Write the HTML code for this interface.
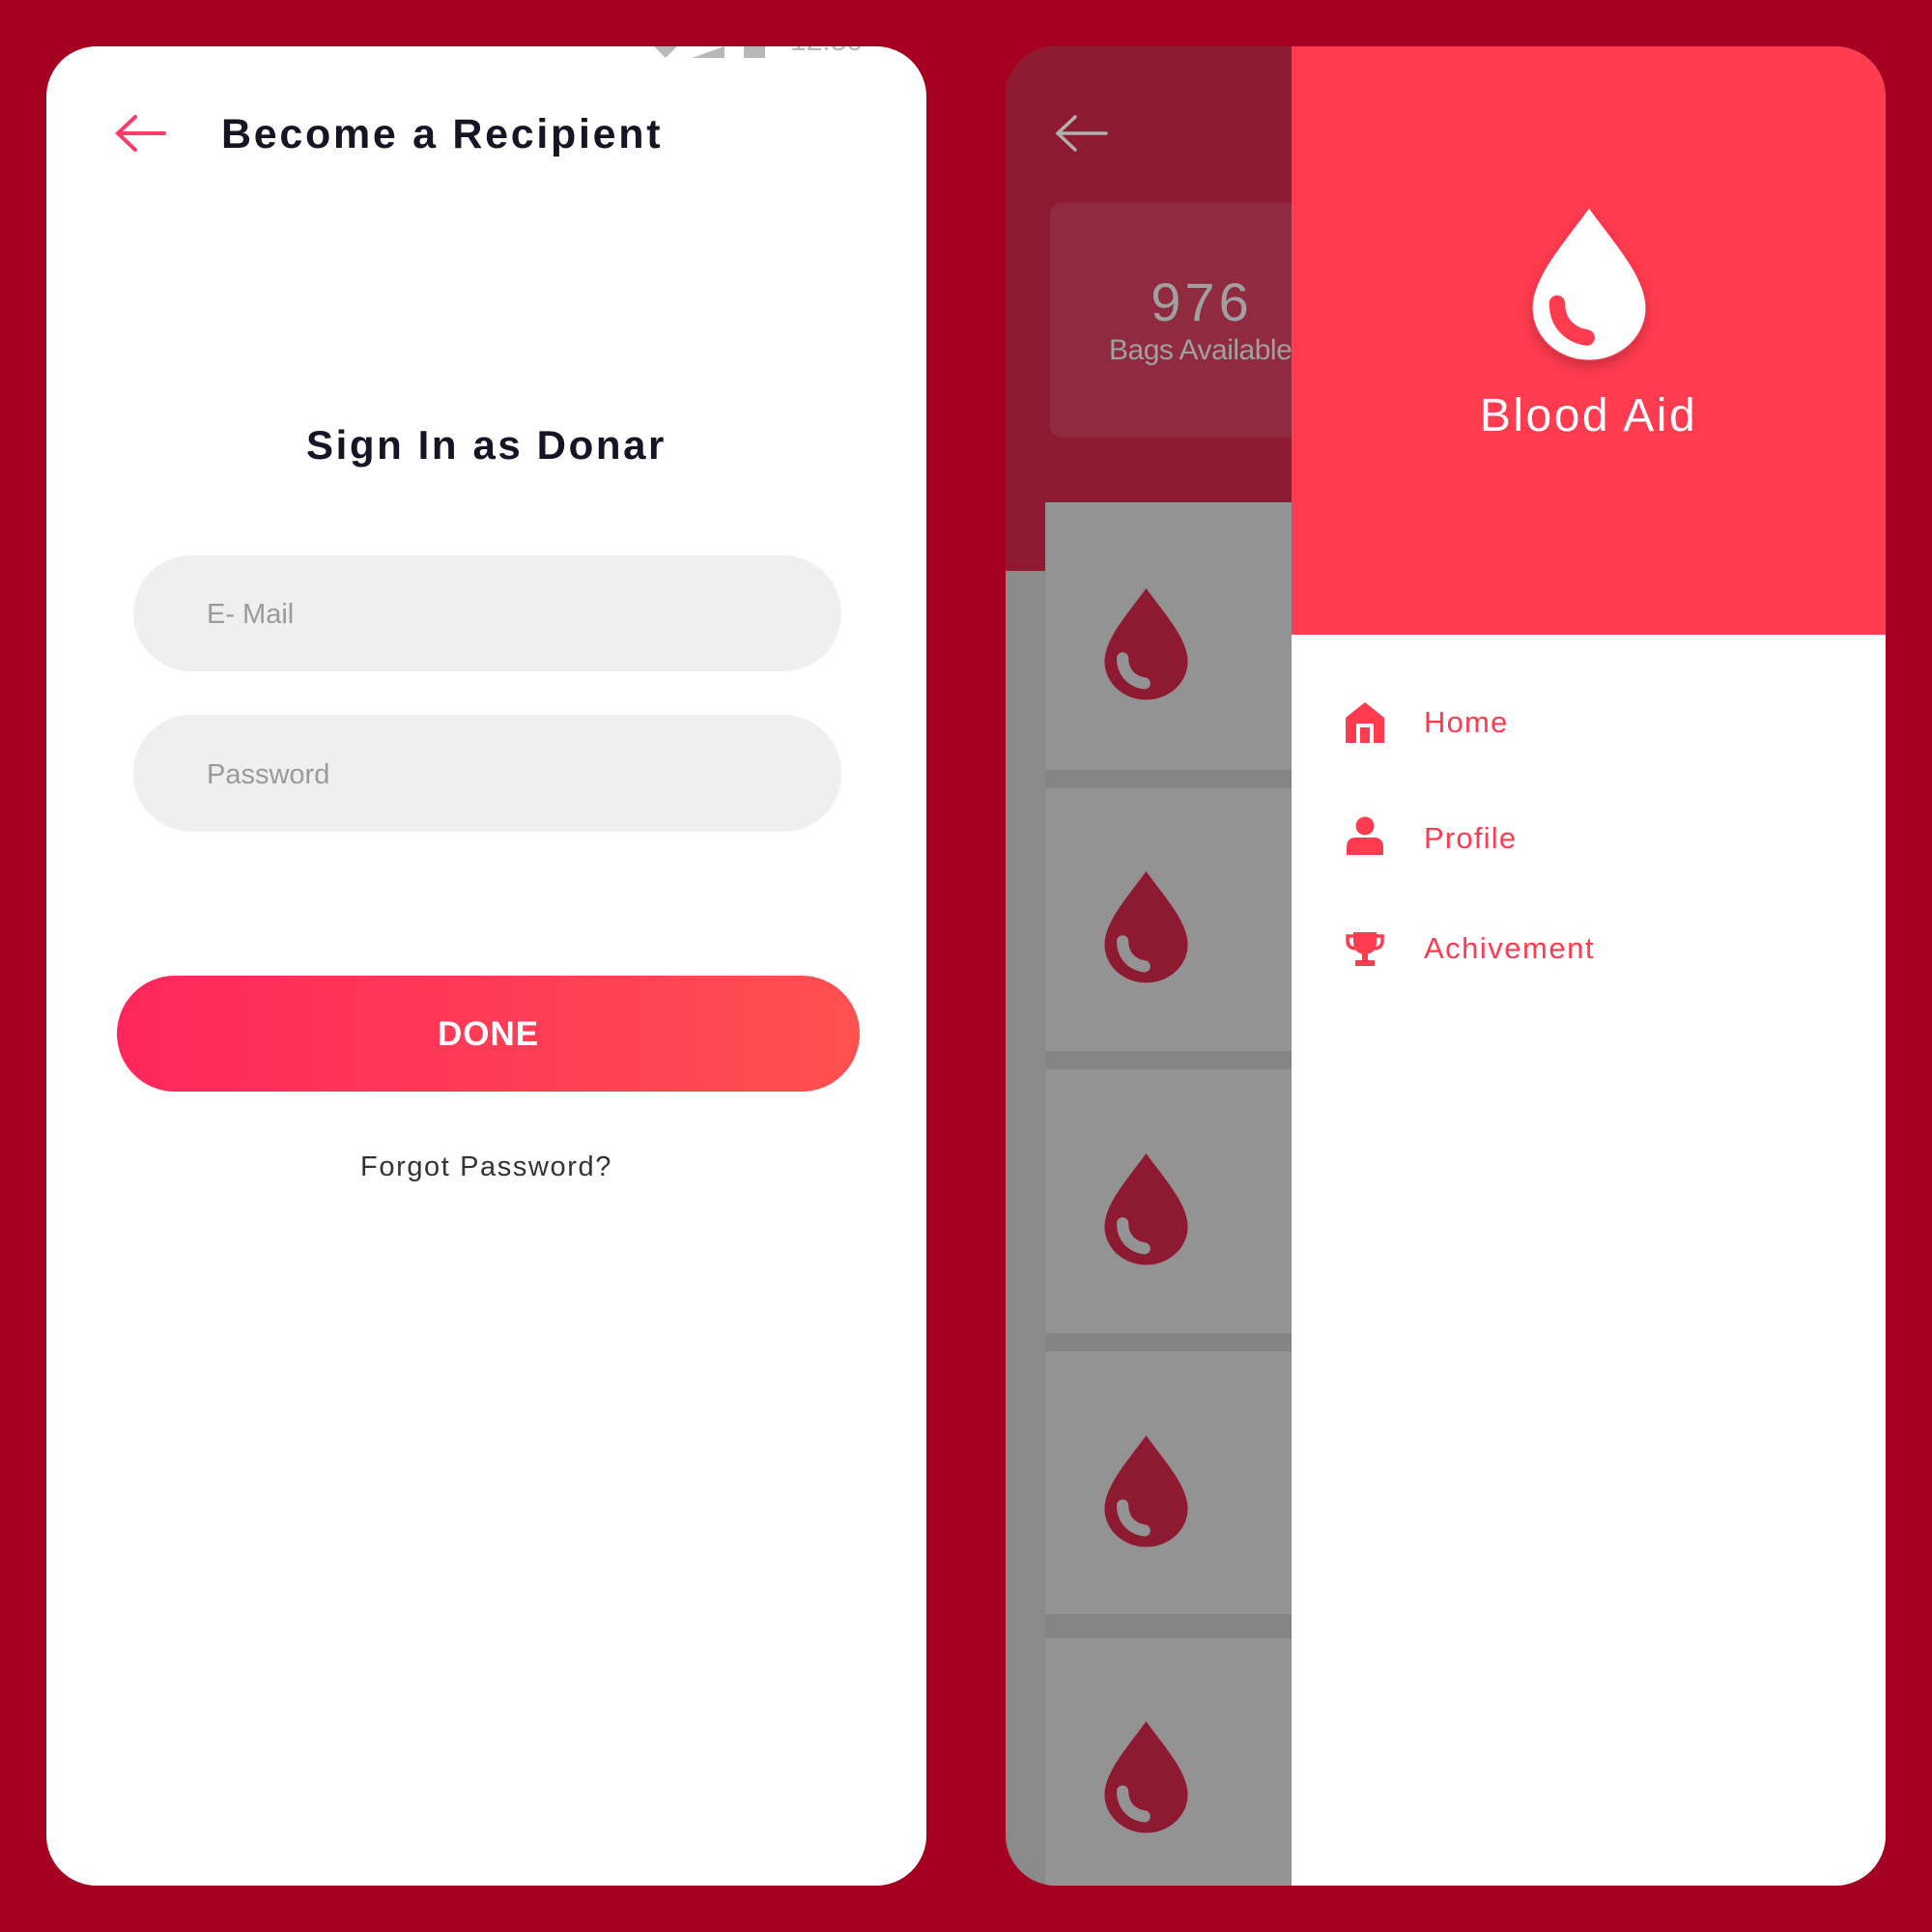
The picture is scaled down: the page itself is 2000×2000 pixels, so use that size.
<!DOCTYPE html>
<html><head><style>
*{margin:0;padding:0;box-sizing:border-box}
body{width:2000px;height:2000px;background:#a50021;position:relative;overflow:hidden;font-family:"Liberation Sans",sans-serif}
.a{position:absolute}
</style></head><body>
<div class="a" style="left:48px;top:48px;width:911px;height:1904px;background:#fff;border-radius:52px;overflow:hidden">
  <div class="a" style="left:629px;top:0;width:24px;height:12px;background:#b8b8b8;clip-path:polygon(0 0,100% 0,50% 100%)"></div>
  <div class="a" style="left:668px;top:0;width:34px;height:12px;background:#b8b8b8;clip-path:polygon(100% 0,100% 100%,0 100%)"></div>
  <div class="a" style="left:722px;top:0;width:22px;height:12px;background:#b8b8b8"></div>
  <div class="a" style="left:770px;top:-22px;font-size:30px;color:#b8b8b8">12:30</div>
  <svg class="a" style="left:70px;top:70px" width="54" height="40" viewBox="0 0 54 40"><path d="M52 20H4M22 3L4 20l18 17" stroke="#ff3b6a" stroke-width="4" fill="none" stroke-linecap="round"/></svg>
  <div class="a" style="left:181px;top:67px;font-size:43px;font-weight:bold;color:#151525;white-space:nowrap;letter-spacing:2.7px">Become a Recipient</div>
  <div class="a" style="left:0;width:911px;top:389px;text-align:center;font-size:42px;font-weight:bold;color:#151525;letter-spacing:2.6px">Sign In as Donar</div>
  <div class="a" style="left:90px;top:527px;width:733px;height:120px;border-radius:60px;background:#efefef"></div>
  <div class="a" style="left:166px;top:572px;font-size:29px;color:#9a9a9a">E- Mail</div>
  <div class="a" style="left:90px;top:692px;width:733px;height:121px;border-radius:60px;background:#efefef"></div>
  <div class="a" style="left:166px;top:738px;font-size:29px;color:#9a9a9a">Password</div>
  <div class="a" style="left:73px;top:962px;width:769px;height:120px;border-radius:60px;background:linear-gradient(90deg,#ff265c,#ff5050)"></div>
  <div class="a" style="left:73px;top:1003px;width:769px;text-align:center;font-size:35px;font-weight:bold;color:#fff;letter-spacing:1px">DONE</div>
  <div class="a" style="left:0;width:911px;top:1144px;text-align:center;font-size:29px;color:#333;letter-spacing:1.6px">Forgot Password?</div>
</div>

<div class="a" style="left:1041px;top:48px;width:911px;height:1904px;border-radius:52px;overflow:hidden;background:#8a8a8a">
  <div class="a" style="left:0;top:0;width:296px;height:543px;background:#8e1a32"></div>
  <svg class="a" style="left:50px;top:70px" width="56" height="40" viewBox="0 0 56 40"><path d="M54 20H4M22 3L4 20l18 17" stroke="#b0b0b0" stroke-width="3.5" fill="none" stroke-linecap="round"/></svg>
  <div class="a" style="left:46px;top:162px;width:260px;height:243px;background:#902a3e;border-radius:12px"></div>
  <div class="a" style="left:70px;top:232px;width:266px;text-align:center;font-size:56px;color:#a0a0a0;letter-spacing:4px">976</div>
  <div class="a" style="left:107px;top:298px;font-size:30px;color:#a0a0a0;white-space:nowrap;letter-spacing:-0.5px">Bags Available</div>
  <div class="a" style="left:41px;top:472px;width:260px;height:1440px;background:#858585"></div>
  <div class="a" style="left:41px;top:472px;width:260px;height:277px;background:#939393"></div>
  <div class="a" style="left:41px;top:768px;width:260px;height:272px;background:#939393"></div>
  <div class="a" style="left:41px;top:1059px;width:260px;height:273px;background:#939393"></div>
  <div class="a" style="left:41px;top:1351px;width:260px;height:272px;background:#939393"></div>
  <div class="a" style="left:41px;top:1648px;width:260px;height:260px;background:#939393"></div>
  <svg width="0" height="0" style="position:absolute"><defs><symbol id="d" viewBox="0 0 100 134"><path d="M50 0C30 28 0 60 0 88a50 46 0 0 0 100 0C100 60 70 28 50 0Z"/><path d="M22 84c0 18 12 28 26 30" stroke-width="14" stroke-linecap="round" fill="none"/></symbol></defs></svg>
  <svg class="a" style="left:102px;top:560px" width="87" height="117"><use href="#d" fill="#8e1a32" stroke="#939393"/></svg>
  <svg class="a" style="left:102px;top:853px" width="87" height="117"><use href="#d" fill="#8e1a32" stroke="#939393"/></svg>
  <svg class="a" style="left:102px;top:1145px" width="87" height="117"><use href="#d" fill="#8e1a32" stroke="#939393"/></svg>
  <svg class="a" style="left:102px;top:1437px" width="87" height="117"><use href="#d" fill="#8e1a32" stroke="#939393"/></svg>
  <svg class="a" style="left:102px;top:1733px" width="87" height="117"><use href="#d" fill="#8e1a32" stroke="#939393"/></svg>
  <div class="a" style="left:296px;top:0;width:615px;height:609px;background:#ff3b50"></div>
  <div class="a" style="left:296px;top:609px;width:615px;height:1295px;background:#fff"></div>
  <svg class="a" style="left:545px;top:166px;filter:drop-shadow(0 6px 6px rgba(0,0,0,.2))" width="118" height="160"><use href="#d" fill="#fff" stroke="#ff3b50"/></svg>
  <div class="a" style="left:296px;top:355px;width:615px;text-align:center;font-size:48px;color:#fff;letter-spacing:2.5px">Blood Aid</div>
  <svg class="a" style="left:352px;top:679px" width="40" height="42" viewBox="0 0 40 42"><path d="M20 0L40 16V42H29V22H11V42H0V16Z" fill="#ff3b50"/><rect x="15" y="26" width="10" height="16" fill="#ff3b50"/></svg>
  <div class="a" style="left:433px;top:682px;font-size:31px;color:#ff3b50;letter-spacing:1.2px">Home</div>
  <svg class="a" style="left:353px;top:797px" width="38" height="40" viewBox="0 0 38 40"><circle cx="19" cy="10" r="9.5" fill="#ff3b50"/><path d="M0 40V32Q0 22 10 22H28Q38 22 38 32V40Z" fill="#ff3b50"/></svg>
  <div class="a" style="left:433px;top:802px;font-size:31px;color:#ff3b50;letter-spacing:1.2px">Profile</div>
  <svg class="a" style="left:351px;top:917px" width="42" height="36" viewBox="0 0 42 36"><path d="M9 0H33V10Q33 22 21 23Q9 22 9 10Z" fill="#ff3b50"/><path d="M9 4H3V9Q3 16 11 17M33 4H39V9Q39 16 31 17" stroke="#ff3b50" stroke-width="3.5" fill="none"/><rect x="18" y="22" width="6" height="8" fill="#ff3b50"/><rect x="11" y="29" width="20" height="6" fill="#ff3b50"/></svg>
  <div class="a" style="left:433px;top:916px;font-size:31px;color:#ff3b50;letter-spacing:1.5px">Achivement</div>
</div>
</body></html>
